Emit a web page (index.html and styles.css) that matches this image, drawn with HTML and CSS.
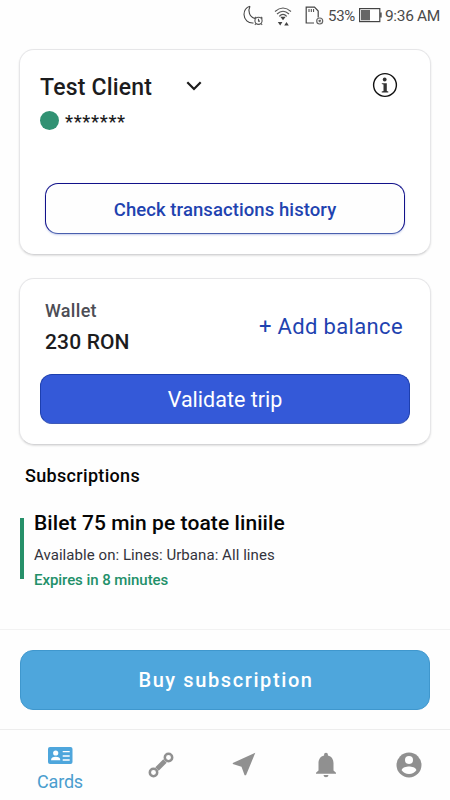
FILE: index.html
```html
<!DOCTYPE html>
<html lang="en">
<head>
<meta charset="utf-8">
<title>Cards</title>
<link rel="stylesheet" href="styles.css">
</head>
<body>
<div class="screen">
  <header class="status">
    <svg class="moon" width="22" height="22" viewBox="0 0 22 22" fill="none" stroke="#444" stroke-width="1.1">
      <path d="M7 1.2C2.6 2.500 1 6 1 9.500C1.200 14.500 5 18.500 10.500 18"/>
      <path d="M7 1.200C4.800 5.500 6 11.800 12 13.500"/>
      <circle cx="15.500" cy="15.800" r="3.600" stroke="#555"/><path d="M15.500 13.800v2.300h1.500M11.500 13.300l1.700-1.500M17.800 11.800l1.700 1.500M12.900 18.500l-1 1.300M18.100 18.500l1 1.300" stroke="#555"/>
    </svg>
    <svg class="wifi" width="18" height="20" viewBox="0 0 18 20" fill="none" stroke="#555" stroke-width="1.100">
      <path d="M1 4.500Q9-2.500 17 4.500M3 7Q9 1.500 15 7M5.200 9.300Q9 5.500 12.800 9.300"/>
      <path d="M6.300 9.800h5.400L9 13.300zM3.800 15h4.600L6.200 18.500zM10.200 18.500h4.600l-2.300-3.500z" fill="#444" stroke="none"/>
    </svg>
    <svg class="sim" width="19" height="20" viewBox="0 0 19 20" fill="none" stroke="#444" stroke-width="1.200">
      <path d="M9 17H1.200V1.200H9.500L13.200 5V11.500"/><path d="M4 3v3M6.300 3v3M8.600 3v3" stroke-width="1"/>
      <circle cx="14.700" cy="15" r="3" stroke="#666"/><path d="M13.700 14l2 2M15.700 14l-2 2" stroke="#666"/>
    </svg>
    <span class="percent">53%</span>
    <svg class="battery" width="23" height="15" viewBox="0 0 23 15">
      <rect x=".6" y=".6" width="20.200" height="13" fill="#fff" stroke="#444" stroke-width="1.200"/>
      <path d="M2 2h9v10.300H2z" fill="#666"/><path d="M21 4.500h1.700v5H21z" fill="#555"/>
    </svg>
    <span class="clock">9:36 AM</span>
  </header>

  <main class="content">
    <section class="card client">
      <div class="client-row">
        <h1 class="client-name">Test Client</h1>
        <svg class="chevron" width="16" height="10" viewBox="0 0 16 10" fill="none" stroke="#1c1c1c" stroke-width="2.200"><path d="M1.300 1.300L8 8L14.700 1.300"/></svg>
        <svg class="info" width="26" height="26" viewBox="0 0 26 26">
          <circle cx="13" cy="13" r="11.400" fill="none" stroke="#111" stroke-width="1.400"/>
          <circle cx="12.700" cy="7.500" r="1.900" fill="#333"/>
          <path d="M9.800 11.300h5v7.800l1.500.5v.9H9.700v-.9l1.800-.5v-6.600l-1.700-.4z" fill="#333"/>
        </svg>
      </div>
      <div class="client-id"><span class="dot"></span><span class="mask">*******</span></div>
      <button class="history">Check transactions history</button>
    </section>

    <section class="card wallet">
      <div class="wallet-row">
        <div>
          <div class="wallet-label">Wallet</div>
          <div class="wallet-sum">230 RON</div>
        </div>
        <a class="add">+ Add balance</a>
      </div>
      <button class="validate">Validate trip</button>
    </section>

    <h2 class="heading">Subscriptions</h2>
    <article class="ticket">
      <h3 class="ticket-name">Bilet 75 min pe toate liniile</h3>
      <p class="ticket-lines">Available on: Lines: Urbana: All lines</p>
      <p class="ticket-expiry">Expires in 8 minutes</p>
    </article>
  </main>

  <div class="buy-bar"><button class="buy">Buy subscription</button></div>

  <nav class="tabs">
    <a class="tab active">
      <svg width="25" height="17" viewBox="0 0 25 17"><rect width="24.500" height="17" rx="2" fill="#4ea6dc"/><circle cx="7.700" cy="6" r="2.600" fill="#fff"/><path d="M3 13.300C3 10.500 5 9.700 7.700 9.700S12.300 10.500 12.300 13.300z" fill="#fff"/><path d="M14.700 4.700h7M14.700 9h7M14.700 13h7" stroke="#fff" stroke-width="1.300"/></svg>
      <span class="tab-label">Cards</span>
    </a>
    <a class="tab"><svg width="26" height="26" viewBox="0 0 26 26" fill="none" stroke="#909090"><path d="M9 17L17 9" stroke-width="4.800"/><circle cx="20.500" cy="5.500" r="3.700" stroke-width="2.500" fill="#fff"/><circle cx="5.500" cy="20.500" r="3.700" stroke-width="2.500" fill="#fff"/></svg></a>
    <a class="tab"><svg width="24" height="24" viewBox="0 0 24 24"><path d="M23.300.8L.8 10.900V12.100L9.500 14.700L12.600 23.300H14z" fill="#909090"/></svg></a>
    <a class="tab"><svg width="22" height="26" viewBox="0 0 22 26" fill="#909090"><path d="M11 .8c1.200 0 1.900.8 1.900 1.900v.8c3.800.9 5.600 4 5.600 7.800v7.200l2.500 2.300v1H1v-1l2.500-2.300v-7.200c0-3.800 1.800-6.900 5.600-7.800v-.8c0-1.100.7-1.900 1.900-1.900zM8.600 23h4.800c0 1.300-1.100 2.300-2.400 2.300S8.600 24.300 8.600 23z"/></svg></a>
    <a class="tab"><svg width="26" height="26" viewBox="0 0 26 26"><circle cx="13" cy="13" r="12.500" fill="#909090"/><circle cx="13" cy="8" r="4" fill="#fff"/><path d="M5.600 18.200C6 15.500 10.500 14.500 13 14.500s7 1 7.400 3.700C18.800 20.600 16.100 22 13 22s-5.800-1.400-7.400-3.800z" fill="#fff"/></svg></a>
  </nav>
</div>
</body>
</html>
```

FILE: styles.css
```css
* { box-sizing: border-box; }
body { margin: 0; background: #fefefe; font-family: Roboto, sans-serif; color: #1c1c1e; }
h1, h2, h3, p { margin: 0; }
button { font-family: inherit; display: block; padding: 0; }
svg { display: block; flex: none; }
.screen { width: 450px; height: 800px; display: flex; flex-direction: column; overflow: hidden; }
.status { height: 49px; padding: 5px 0 0 243px; display: flex; align-items: flex-start; color: #4a4a4a; font-size: 16px; line-height: 22px; white-space: nowrap; }
.wifi { margin: 2px 0 0 9px; }
.sim { margin: 1px 0 0 13px; }
.percent { width: 31px; margin-left: 4px; font-size: 15px; letter-spacing: -0.3px; }
.battery { margin: 3px 0 0 0; }
.clock { margin-left: 3px; font-size: 15.500px; letter-spacing: -0.35px; }
.content { padding: 0 19px; height: 580px; }
.card { width: 412px; border: 1px solid #e6e6e8; border-bottom-color: #d4d4d6; border-radius: 15px; background: #fff; box-shadow: 0 1px 2px rgba(0,0,0,.12); }
.client { height: 206px; padding: 22px 20px 0; }
.client-row { display: flex; align-items: center; height: 28px; }
.client-name { padding-top: 3px; font-size: 23px; line-height: 28px; font-weight: 460; width: 146px; letter-spacing: .2px; white-space: nowrap; }
.info { margin: -2px 12px 0 auto; }
.client-id { display: flex; align-items: center; height: 20px; margin-top: 10px; }
.dot { width: 19px; height: 19px; border-radius: 50%; background: #319273; }
.mask { margin: 3px 0 0 6px; font-size: 18px; line-height: 20px; font-weight: 460; letter-spacing: .7px; }
.history { width: 360px; height: 51px; margin: 53px 0 0 5px; border: 1.5px solid #12128a; border-bottom-color: #4a5fae; border-radius: 13px; background: #fefefe; color: #1f43b0; font-size: 18.500px; font-weight: 460; letter-spacing: .08px; padding-top: 2px; box-shadow: 0 1px 2px rgba(30,60,180,.25); }
.wallet { height: 167px; margin-top: 23px; padding: 20px 20px 0; }
.wallet-row { display: flex; justify-content: space-between; height: 75px; padding: 0 7px 0 5px; }
.wallet-label { font-size: 18px; line-height: 24px; font-weight: 460; letter-spacing: .3px; color: #4d4d55; }
.wallet-sum { margin-top: 5px; font-size: 21px; line-height: 28px; font-weight: 460; letter-spacing: .15px; }
.add { margin-top: 13px; font-size: 22px; line-height: 30px; color: #1f43b0; letter-spacing: .35px; }
.validate { width: 370px; height: 50px; border: 1px solid #1d3fae; border-bottom-color: #3f5bb8; border-radius: 12px; background: #3459d8; color: #fff; font-size: 21.500px; letter-spacing: 0; }
.heading { margin: 19px 0 0 6px; font-size: 18px; line-height: 24px; font-weight: 480; letter-spacing: .32px; color: #050505; }
.ticket { position: relative; margin-top: 21px; padding-left: 15px; }
.ticket::before { content: ""; position: absolute; left: 1px; top: 9px; width: 4px; height: 61px; background: #269069; }
.ticket-name { font-size: 21px; line-height: 28px; font-weight: 480; letter-spacing: .08px; color: #050505; }
.ticket-lines { margin-top: 8px; font-size: 15px; line-height: 20px; font-weight: 430; letter-spacing: .06px; color: #33333c; }
.ticket-expiry { margin-top: 5px; font-size: 15px; line-height: 20px; font-weight: 480; letter-spacing: -.06px; color: #229069; }
.buy-bar { height: 100px; padding: 20px 20px 0; border-top: 1px solid #f2f2f2; }
.buy { width: 410px; height: 60px; border: 1px solid #3f97cd; border-radius: 13px; background: #4ea6dc; color: #fff; font-size: 20px; font-weight: 480; letter-spacing: 1.600px; padding: 0 0 0 2px; }
.tabs { height: 71px; border-top: 1px solid #ededed; display: grid; grid-template-columns: 120px 82px 83px 82px 83px; }
.tab { display: flex; flex-direction: column; align-items: center; padding-top: 22px; }
.active { padding-top: 17px; color: #4a9dce; }
.tab-label { margin-top: 7px; font-size: 18px; line-height: 22px; letter-spacing: -.2px; }
```
